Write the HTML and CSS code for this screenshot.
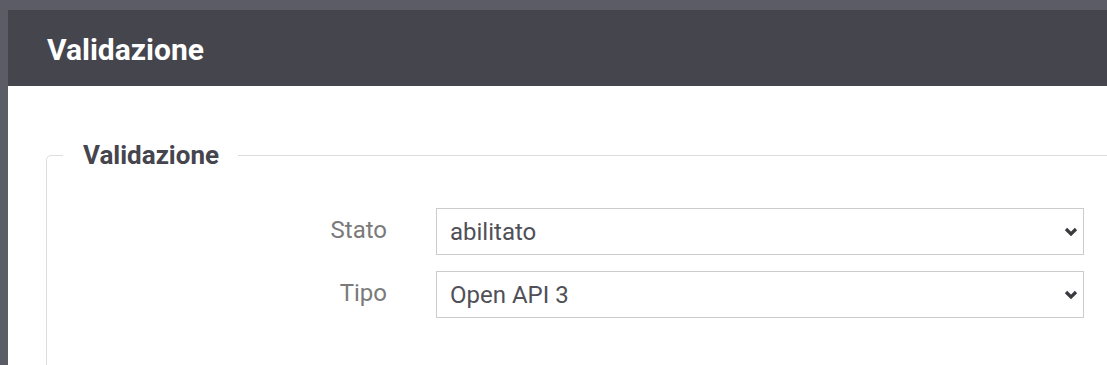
FILE: index.html
```html
<!DOCTYPE html>
<html>
<head>
  <title>Validazione</title>
  <link rel="stylesheet" href="styles.css">
</head>
<body>
  <div class="frame">
    <div class="panel">
      <div class="panel-header">
        <h2>Validazione</h2>
      </div>
      <div class="panel-body">
        <fieldset class="group">
          <legend>Validazione</legend>
          <div class="form-grid">
            <label for="stato">Stato</label>
            <div class="select-wrap">
              <select id="stato">
                <option>abilitato</option>
                <option>disabilitato</option>
              </select>
              <svg class="chevron" width="14" height="9" viewBox="0 0 14 9"><path d="M2 2 L7 7 L12 2" fill="none" stroke="#3a3a40" stroke-width="3.2"/></svg>
            </div>
            <label for="tipo">Tipo</label>
            <div class="select-wrap">
              <select id="tipo">
                <option>Open API 3</option>
                <option>WSDL</option>
              </select>
              <svg class="chevron" width="14" height="9" viewBox="0 0 14 9"><path d="M2 2 L7 7 L12 2" fill="none" stroke="#3a3a40" stroke-width="3.2"/></svg>
            </div>
          </div>
        </fieldset>
      </div>
    </div>
  </div>
</body>
</html>
```

FILE: styles.css
```css
html, body {
  margin: 0;
  height: 100%;
  overflow: hidden;
}

body {
  font-family: Roboto, "Liberation Sans", sans-serif;
}

.frame {
  background-color: #5c5c66;
  padding: 10px 0 0 8px;
  height: 100%;
  box-sizing: border-box;
}

.panel {
  background-color: #fff;
  height: 100%;
  overflow: hidden;
}

.panel-header {
  background-color: #45454e;
  height: 76px;
  display: flex;
  align-items: center;
  padding-left: 39px;
}

.panel-header h2 {
  margin: 0;
  padding-top: 2px;
  color: #fff;
  font-size: 30px;
  font-weight: 700;
}

.panel-body {
  padding: 54px 0 0 38px;
}

.group {
  border: 1px solid #ddd;
  border-radius: 5px;
  margin: 0 -60px 0 0;
  padding: 38px 0 80px 0;
}

.group legend {
  margin-left: 16px;
  padding: 0 19px 0 20px;
  font-size: 26px;
  line-height: 30px;
  font-weight: 700;
  color: #45454e;
}

.form-grid {
  display: grid;
  grid-template-columns: 340px 648px;
  column-gap: 49px;
  row-gap: 16px;
  align-items: center;
}

.form-grid label {
  text-align: right;
  font-size: 24px;
  color: #7a7a7a;
  padding-bottom: 4px;
}

.select-wrap {
  position: relative;
}

.select-wrap select {
  appearance: none;
  width: 100%;
  height: 47px;
  border: 1px solid #ccc;
  border-radius: 0;
  background-color: #fff;
  padding: 0 40px 0 13px;
  font-family: Roboto, "Liberation Sans", sans-serif;
  font-size: 24px;
  color: #505058;
}

.chevron {
  position: absolute;
  right: 6px;
  top: 19px;
}
```
